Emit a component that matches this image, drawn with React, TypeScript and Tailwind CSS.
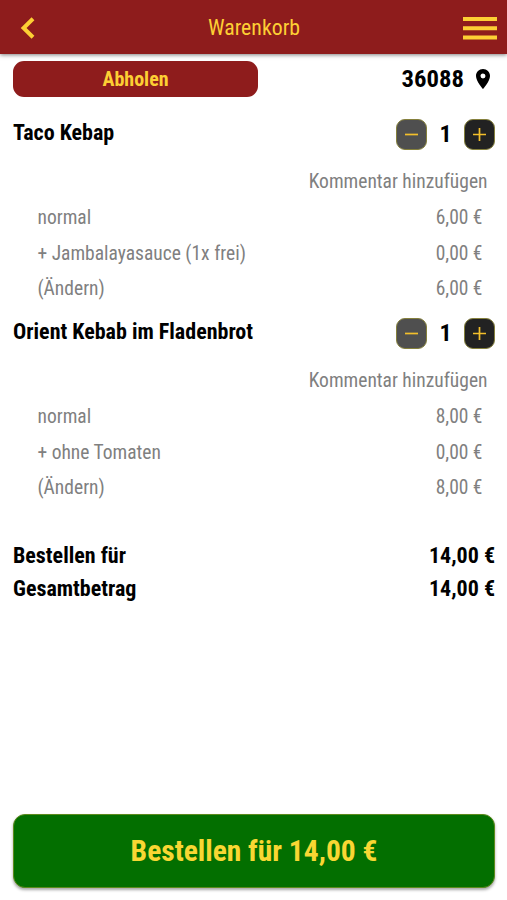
import React, { useState } from "react";

interface Position {
  label: string;
  price: number;
}

interface CartItem {
  id: number;
  name: string;
  quantity: number;
  positions: Position[];
}

const initialItems: CartItem[] = [
  {
    id: 1,
    name: "Taco Kebap",
    quantity: 1,
    positions: [
      { label: "normal", price: 6 },
      { label: "+ Jambalayasauce (1x frei)", price: 0 },
    ],
  },
  {
    id: 2,
    name: "Orient Kebab im Fladenbrot",
    quantity: 1,
    positions: [
      { label: "normal", price: 8 },
      { label: "+ ohne Tomaten", price: 0 },
    ],
  },
];

const formatPrice = (amount: number) =>
  `${amount.toFixed(2).replace(".", ",")} €`;

const itemTotal = (item: CartItem) =>
  item.quantity * item.positions.reduce((sum, p) => sum + p.price, 0);

const Row: React.FC<Position> = ({ label, price }) => (
  <div className="flex h-[35.5px] items-center justify-between pl-[24.5px] pr-[12.5px]">
    <span>{label}</span>
    <span>{formatPrice(price)}</span>
  </div>
);

const App: React.FC = () => {
  const [items, setItems] = useState<CartItem[]>(initialItems);

  const changeQuantity = (id: number, delta: number) => {
    setItems((prev) =>
      prev.map((item) =>
        item.id === id
          ? { ...item, quantity: Math.max(1, item.quantity + delta) }
          : item
      )
    );
  };

  const total = items.reduce((sum, item) => sum + itemTotal(item), 0);

  return (
    <div className="flex h-[900px] w-full flex-col bg-white font-['Roboto_Condensed',Roboto,sans-serif] text-black [font-stretch:75%]">
      <header className="grid h-[54px] shrink-0 grid-cols-[1fr_auto_1fr] items-center bg-[#8e1c1c] pl-[11px] pr-[10px] pt-[2px] text-[#fdcf34] shadow-[0_1px_4px_rgba(0,0,0,0.5)]">
        <button aria-label="Zurück" className="justify-self-start pl-[9px]">
          <svg width="15" height="22" viewBox="0 0 15 22" fill="none" stroke="currentColor" strokeWidth="4">
            <path d="M13 1.8 3.6 11 13 20.2" />
          </svg>
        </button>
        <h1 className="text-[21.8px] leading-[26px]">Warenkorb</h1>
        <button aria-label="Menü" className="justify-self-end">
          <svg width="34" height="23" viewBox="0 0 34 23" fill="currentColor">
            <path d="M0 0h34v4H0zM0 9.3h34v4H0zM0 18.6h34v4H0z" />
          </svg>
        </button>
      </header>

      <main className="flex flex-1 flex-col pl-[13px] pr-[12px] pt-[7px]">
        <div className="flex h-[36px] items-center justify-between">
          <button className="h-[36px] w-[245px] rounded-[11px] bg-[#8e1c1c] text-[20px] font-bold text-[#fdcf34]">
            Abholen
          </button>
          <div className="flex items-center gap-[12px] pr-[5px]">
            <span className="text-[24.7px] font-bold">36088</span>
            <svg width="14" height="20" viewBox="5 2 14 20" fill="currentColor">
              <path d="M12 2C8.13 2 5 5.13 5 9c0 5.25 7 13 7 13s7-7.75 7-13c0-3.87-3.13-7-7-7zm0 9.5a2.5 2.5 0 0 1 0-5 2.5 2.5 0 0 1 0 5z" />
            </svg>
          </div>
        </div>

        <div className="pt-[19px]">
          {items.map((item) => (
            <section key={item.id} className="h-[199px]">
              <div className="flex h-[36px] items-center justify-between">
                <h2 className="pb-[3px] text-[22px] font-bold">{item.name}</h2>
                <div className="flex items-center">
                  <button
                    aria-label="Weniger"
                    onClick={() => changeQuantity(item.id, -1)}
                    className="flex size-[31px] items-center justify-center rounded-[9px] border border-[#85803c] bg-[#4f4f4f] text-[#f3bf2b]"
                  >
                    <svg width="13" height="13" viewBox="0 0 13 13" stroke="currentColor" strokeWidth="1.7">
                      <path d="M0 6.5h13" />
                    </svg>
                  </button>
                  <span className="w-[37px] text-center text-[24px] font-bold">
                    {item.quantity}
                  </span>
                  <button
                    aria-label="Mehr"
                    onClick={() => changeQuantity(item.id, 1)}
                    className="flex size-[31px] items-center justify-center rounded-[9px] border border-[#85803c] bg-[#222222] text-[#f3bf2b]"
                  >
                    <svg width="13" height="13" viewBox="0 0 13 13" stroke="currentColor" strokeWidth="1.7">
                      <path d="M0 6.5h13M6.5 0v13" />
                    </svg>
                  </button>
                </div>
              </div>
              <div className="text-[19.5px] text-[#808080]">
                <div className="flex h-[48px] items-center justify-end pr-[7.5px] pt-[11px]">
                  Kommentar hinzufügen
                </div>
                {item.positions.map((position) => (
                  <Row key={position.label} {...position} />
                ))}
                <Row label="(Ändern)" price={itemTotal(item)} />
              </div>
            </section>
          ))}
        </div>

        <div className="pt-[25px] text-[22px] font-bold leading-[33px]">
          <div className="flex justify-between">
            <span>Bestellen für</span>
            <span>{formatPrice(total)}</span>
          </div>
          <div className="flex justify-between">
            <span>Gesamtbetrag</span>
            <span>{formatPrice(total)}</span>
          </div>
        </div>

        <button className="mb-[12px] mt-auto h-[74px] w-full rounded-[12px] border border-[#5d8b1c] bg-[#036f00] text-[29.5px] font-bold text-[#f8d733] shadow-[0_2px_3px_rgba(0,0,0,0.35)]">
          Bestellen für {formatPrice(total)}
        </button>
      </main>
    </div>
  );
};

export default App;
